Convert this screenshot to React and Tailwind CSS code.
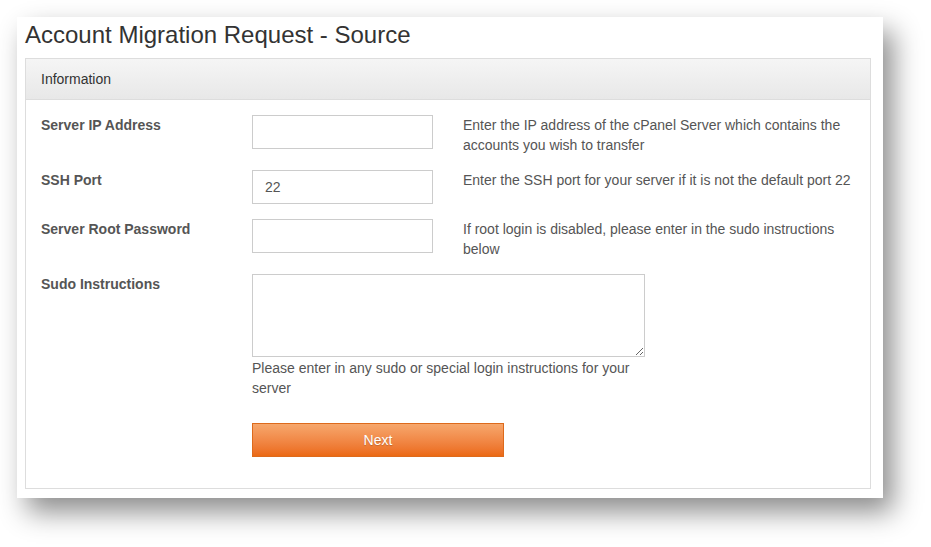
import React from "react";

const rows = [
  {
    label: "Server IP Address",
    value: "",
    help: "Enter the IP address of the cPanel Server which contains the accounts you wish to transfer",
  },
  {
    label: "SSH Port",
    value: "22",
    help: "Enter the SSH port for your server if it is not the default port 22",
  },
  {
    label: "Server Root Password",
    value: "",
    help: "If root login is disabled, please enter in the sudo instructions below",
  },
];

const App = () => {
  return (
    <div
      className="w-[931px] h-[547px] bg-white pt-[17px] pl-[17px] text-[14px] text-[#444]"
      style={{ fontFamily: '"Liberation Sans", Arial, sans-serif' }}
    >
      <div className="w-[866px] h-[481px] bg-white pl-[8px] pr-[12px] shadow-[10px_14px_26px_rgba(0,0,0,0.45)]">
        <h1 className="pt-[1px] h-[41px] text-[24px] leading-[34px] text-[#333]">
          Account Migration Request - Source
        </h1>
        <div className="border border-[#dddddd] h-[431px]">
          <div className="h-[41px] border-b border-[#dddddd] bg-gradient-to-b from-[#f5f5f5] to-[#e8e8e8] px-[15px] flex items-center text-[#333]">
            Information
          </div>
          <div className="pt-[15px] pl-[15px]">
            {rows.map((r) => (
              <div key={r.label} className="flex mb-[15px]">
                <div className="w-[211px] font-bold leading-[20px] text-[#555]">{r.label}</div>
                <input
                  defaultValue={r.value}
                  className="w-[181px] h-[34px] border border-[#cccccc] px-[12px] text-[14px] text-[#555] outline-none"
                />
                <div className="w-[400px] ml-[30px] leading-[20px] text-[#555]">{r.help}</div>
              </div>
            ))}
            <div className="flex">
              <div className="w-[211px] font-bold leading-[20px] text-[#555]">Sudo Instructions</div>
              <div className="flex flex-col">
                <textarea className="w-[393px] h-[83px] border border-[#cccccc] block outline-none" />
                <div className="w-[390px] leading-[20px] text-[#555] mt-[1px]">
                  Please enter in any sudo or special login instructions for your server
                </div>
                <button className="mt-[25px] w-[252px] h-[34px] border border-[#dd6a1c] bg-gradient-to-b from-[#f6a76c] to-[#eb6912] text-white text-[14px] [text-shadow:0_1px_1px_rgba(0,0,0,0.2)]">
                  Next
                </button>
              </div>
            </div>
          </div>
        </div>
      </div>
    </div>
  );
};

export default App;
